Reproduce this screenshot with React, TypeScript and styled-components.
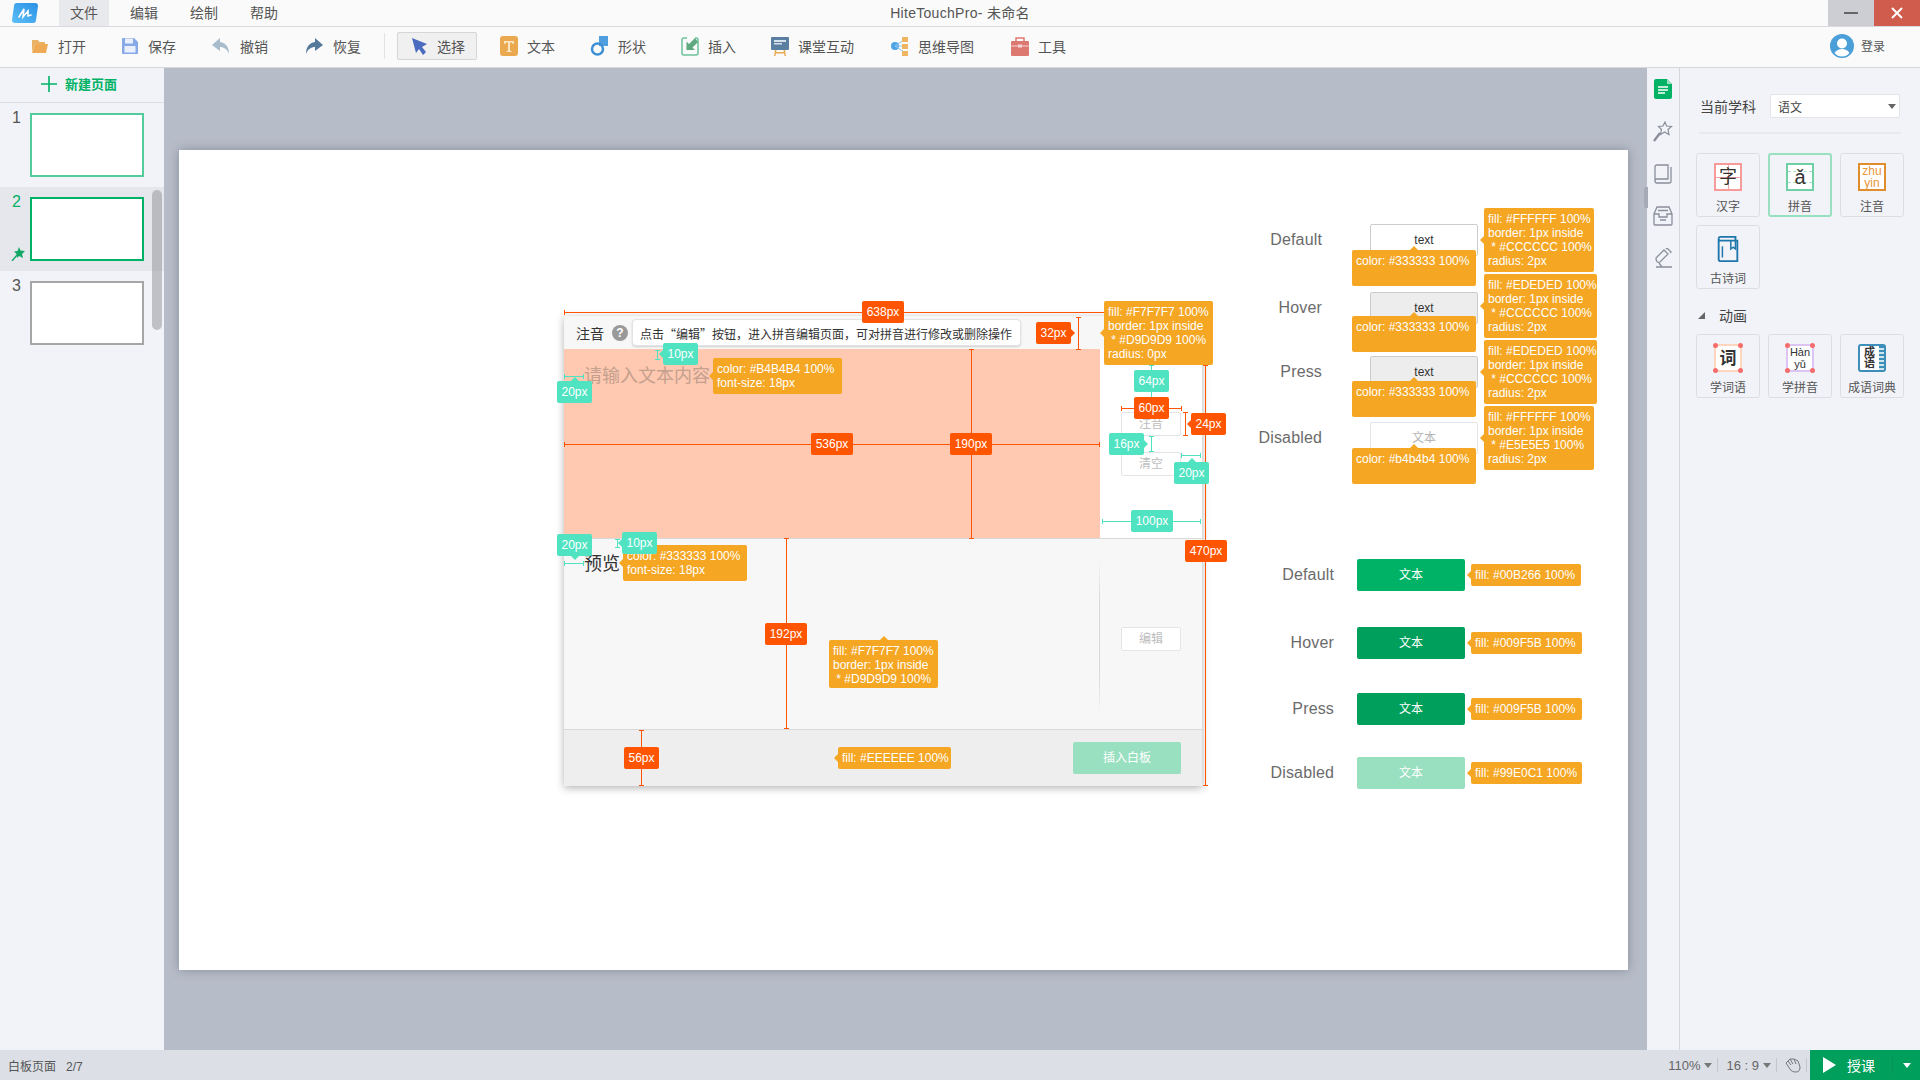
import React from 'react';
import styled, { createGlobalStyle, css } from 'styled-components';

const GlobalStyle = createGlobalStyle`
  * {
    box-sizing: border-box;
  }

  html,
  body {
    margin: 0;
    padding: 0;
    width: 1920px;
    height: 1080px;
    overflow: hidden;
    font-family: 'Liberation Sans', 'Noto Sans CJK SC', sans-serif;
    color: #555;
  }
`;

// page position of the white slide, annotations are listed in page coordinates
const SLIDE_X = 179;
const SLIDE_Y = 150;

const Page = styled.div`
  width: 1920px;
  height: 1080px;
  display: flex;
  flex-direction: column;
  background: #f1f3f8;
`;

const TitleBar = styled.div`
  height: 27px;
  flex: none;
  display: flex;
  position: relative;
  background: #fafafa;
  border-bottom: 1px solid #d9dadd;
`;

const Logo = styled.svg`
  width: 26px;
  height: 20px;
  margin: 3px 21px 0 12px;
`;

const MenuItem = styled.div<{ $active?: boolean }>`
  width: 50px;
  margin-right: 10px;
  height: 26px;
  line-height: 26px;
  text-align: center;
  font-size: 14px;
  color: #555;
  background: ${(p) => (p.$active ? '#e8e9ec' : 'transparent')};
`;

const AppTitle = styled.div`
  position: absolute;
  left: 0;
  right: 0;
  top: 0;
  line-height: 26px;
  text-align: center;
  font-size: 14px;
  letter-spacing: 0.3px;
  color: #555;
`;

const WinButtons = styled.div`
  margin-left: auto;
  display: flex;
`;

const WinButton = styled.div<{ $close?: boolean }>`
  width: 46px;
  height: 26px;
  display: flex;
  align-items: center;
  justify-content: center;
  background: ${(p) => (p.$close ? '#cf5c4c' : '#cdced3')};
`;

const Toolbar = styled.div`
  height: 41px;
  flex: none;
  display: flex;
  align-items: center;
  gap: 1px;
  padding: 0 0 3px 14px;
  background: #fafafa;
  border-bottom: 1px solid #d5d7dd;
`;

const ToolItem = styled.div<{ $selected?: boolean; $offset?: number }>`
  height: 28px;
  display: flex;
  align-items: center;
  gap: 9px;
  padding: 0 17px;
  margin-left: ${(p) => p.$offset || 0}px;
  font-size: 14px;
  color: #555;

  svg {
    flex: none;
  }

  ${(p) =>
    p.$selected &&
    css`
      padding: 0 11px 0 13px;
      background: #f0f0f1;
      border: 1px solid #d5d6d9;
      border-radius: 2px;
    `}
`;

const ToolSep = styled.div`
  width: 1px;
  height: 26px;
  background: #e2e3e6;
  margin: 0 11px 0 5px;
`;

const Login = styled.div`
  margin-left: auto;
  margin-right: 35px;
  display: flex;
  align-items: center;
  gap: 7px;
  font-size: 12px;
  color: #555;
`;

const Middle = styled.div`
  flex: 1;
  min-height: 0;
  display: flex;
`;

const PagesPanel = styled.div`
  width: 164px;
  flex: none;
  position: relative;
  background: #f1f3f8;
`;

const NewPage = styled.div`
  height: 35px;
  padding: 0 0 3px 41px;
  display: flex;
  align-items: center;
  gap: 8px;
  font-size: 13px;
  font-weight: 700;
  color: #00b266;
  border-bottom: 1px solid #dcdee4;
`;

const PageRow = styled.div<{ $active?: boolean }>`
  height: 84px;
  padding: 10px 0 0 30px;
  position: relative;
  background: ${(p) => (p.$active ? '#e5e7ec' : 'transparent')};
`;

const PageNumber = styled.span<{ $active?: boolean }>`
  position: absolute;
  left: 12px;
  top: 5px;
  font-size: 16px;
  line-height: 20px;
  color: ${(p) => (p.$active ? '#00b266' : '#555')};
`;

const Thumb = styled.div<{ $border: string }>`
  width: 114px;
  height: 64px;
  background: #fff;
  border: 2px solid ${(p) => p.$border};
`;

const Pin = styled.svg`
  position: absolute;
  left: 11px;
  top: 60px;
`;

const PagesScroll = styled.div`
  position: absolute;
  left: 152px;
  top: 122px;
  width: 10px;
  height: 140px;
  border-radius: 5px;
  background: rgba(130, 132, 140, 0.45);
`;

const Stage = styled.div`
  flex: 1;
  min-width: 0;
  display: flex;
  padding: 82px 19px 80px 15px;
  background: #b7bcc9;
  position: relative;
`;

const Slide = styled.div`
  flex: 1;
  position: relative;
  background: #fff;
  box-shadow: 0 0 10px rgba(80, 85, 100, 0.45);
`;

const SideHandle = styled.div`
  position: absolute;
  right: -1px;
  top: 119px;
  width: 4px;
  height: 21px;
  border-radius: 2px 0 0 2px;
  background: #a6aab6;
`;

const IconStrip = styled.div`
  width: 33px;
  flex: none;
  display: flex;
  flex-direction: column;
  align-items: center;
  gap: 22px;
  padding-top: 11px;
  border-right: 1px solid #d5d7dd;
  background: #f1f3f8;
`;

const RightPanel = styled.div`
  width: 240px;
  flex: none;
  padding: 26px 16px 0;
  background: #f1f3f8;
`;

const SubjectRow = styled.div`
  display: flex;
  align-items: center;
  gap: 14px;
  margin-left: 4px;
  font-size: 14px;
  color: #444;
`;

const SubjectSelect = styled.div`
  width: 130px;
  height: 24px;
  padding: 0 3px 0 7px;
  display: flex;
  align-items: center;
  justify-content: space-between;
  background: #fff;
  border: 1px solid #e2e4ea;
  border-radius: 2px;
  font-size: 12px;
  color: #444;
`;

const CaretDown = styled.i<{ $color?: string }>`
  width: 0;
  height: 0;
  border-left: 4px solid transparent;
  border-right: 4px solid transparent;
  border-top: 5px solid ${(p) => p.$color || '#666'};
`;

const PanelLine = styled.div`
  height: 2px;
  margin: 14px 3px 19px;
  background: #e7e9ee;
`;

const TileGrid = styled.div`
  display: grid;
  grid-template-columns: repeat(3, 64px);
  gap: 8px;
`;

const Tile = styled.div<{ $active?: boolean }>`
  height: 64px;
  display: flex;
  flex-direction: column;
  align-items: center;
  padding-top: ${(p) => (p.$active ? 8 : 9)}px;
  font-size: 12px;
  color: #555;
  border-radius: 3px;
  border: ${(p) => (p.$active ? '2px solid #99e0c1' : '1px solid #dcdee3')};
`;

const TileLabel = styled.span`
  margin-top: 7px;
  line-height: 18px;
  white-space: nowrap;
`;

const GlyphBox = styled.div<{ $border: string; $color?: string; $size?: number; $round?: boolean }>`
  width: 28px;
  height: 28px;
  flex: none;
  position: relative;
  display: flex;
  align-items: center;
  justify-content: center;
  text-align: center;
  background: #fff;
  border: 2px solid ${(p) => p.$border};
  border-radius: ${(p) => (p.$round ? 3 : 0)}px;
  color: ${(p) => p.$color || '#333'};
  font-size: ${(p) => p.$size || 18}px;
  line-height: 1;
`;

const CrossLines = styled.i<{ $color: string }>`
  position: absolute;
  inset: 0;
  background:
    linear-gradient(${(p) => p.$color}, ${(p) => p.$color}) center / 100% 1px no-repeat,
    linear-gradient(${(p) => p.$color}, ${(p) => p.$color}) center / 1px 100% no-repeat;
`;

const RuleLines = styled.i`
  position: absolute;
  inset: 6px 0;
  border-top: 1px dashed #9fe2c4;
  border-bottom: 1px dashed #9fe2c4;
`;

const Dot = styled.i<{ $r?: boolean; $b?: boolean }>`
  position: absolute;
  width: 5px;
  height: 5px;
  border-radius: 50%;
  background: #f56c6c;
  ${(p) => (p.$r ? 'right: -3px;' : 'left: -3px;')}
  ${(p) => (p.$b ? 'bottom: -3px;' : 'top: -3px;')}
`;

const Spiral = styled.i`
  position: absolute;
  right: 0;
  top: 0;
  bottom: 0;
  width: 5px;
  background: repeating-linear-gradient(#3d8eb9 0 2px, #cfe5f0 2px 4px);
`;

const GlyphText = styled.span<{ $bold?: boolean }>`
  position: relative;
  font-weight: ${(p) => (p.$bold ? 700 : 400)};
`;

const TwoLine = styled.div`
  line-height: 12px;
`;

const IdiomText = styled.div`
  margin-right: 5px;
  font-size: 11px;
  font-weight: 700;
  line-height: 11px;
`;

const SectionHead = styled.div`
  display: flex;
  align-items: center;
  gap: 14px;
  margin: 17px 0 10px 2px;
  height: 18px;
  font-size: 14px;
  color: #444;
`;

const OpenCaret = styled.i`
  width: 0;
  height: 0;
  border-left: 7px solid transparent;
  border-bottom: 7px solid #666;
`;

const StatusBar = styled.div`
  height: 30px;
  flex: none;
  display: flex;
  align-items: center;
  padding-left: 8px;
  background: #dcdfe6;
  font-size: 12px;
  color: #555;
`;

const StatusRight = styled.div`
  margin-left: auto;
  height: 100%;
  display: flex;
  align-items: center;
`;

const StatusItem = styled.div`
  display: flex;
  align-items: center;
  gap: 4px;
  padding: 0 5px 0 8px;
  height: 14px;
  font-size: 13px;
  color: #666;
  border-right: 1px solid #c4c7ce;

  &:last-of-type {
    border-right: 0;
    padding-right: 12px;
  }
`;

const TeachButton = styled.div`
  width: 110px;
  height: 30px;
  margin-left: 3px;
  display: flex;
  align-items: center;
  padding-left: 13px;
  gap: 11px;
  background: #009f5b;
  color: #fff;
  font-size: 14px;
  position: relative;
`;

const TeachCaret = styled.div`
  position: absolute;
  right: 0;
  top: 7px;
  width: 28px;
  height: 16px;
  display: flex;
  align-items: center;
  justify-content: center;
  border-left: 1px solid #0c8f56;
`;

const DesignWindow = styled.div`
  position: absolute;
  left: 385px;
  top: 166px;
  width: 638px;
  height: 470px;
  display: flex;
  flex-direction: column;
  background: #fff;
  box-shadow: 0 2px 8px rgba(0, 0, 0, 0.3);
`;

const DesignHeader = styled.div`
  height: 33px;
  flex: none;
  display: flex;
  align-items: center;
  padding-left: 12px;
  background: #f7f7f7;
  font-size: 14px;
  color: #333;
`;

const HelpMark = styled.span`
  width: 16px;
  height: 16px;
  margin: 0 4px 0 8px;
  border-radius: 50%;
  background: #999;
  color: #fff;
  font-size: 12px;
  font-weight: 700;
  line-height: 16px;
  text-align: center;
`;

const HintBox = styled.div`
  width: 389px;
  height: 27px;
  padding-left: 7px;
  background: #fff;
  border: 1px solid #e3e3e3;
  border-radius: 4px;
  box-shadow: 0 1px 2px rgba(0, 0, 0, 0.15);
  font-family: 'Noto Sans CJK SC', sans-serif;
  font-size: 12px;
  line-height: 27px;
  color: #333;
  white-space: nowrap;
`;

const DesignBody = styled.div`
  height: 189px;
  flex: none;
  display: flex;
`;

const InputArea = styled.div`
  width: 536px;
  flex: none;
  padding: 10px 0 0 20px;
  background: #ffc8b0;
  font-size: 18px;
  line-height: 34px;
  color: #c4a08e;
`;

const ActionColumn = styled.div`
  flex: 1;
  display: flex;
  flex-direction: column;
  gap: 16px;
  padding: 63px 0 0 21px;
`;

const GhostButton = styled.div`
  width: 60px;
  height: 24px;
  background: #fff;
  border: 1px solid #e5e5e5;
  border-radius: 2px;
  font-size: 12px;
  line-height: 23px;
  text-align: center;
  color: #bdbdbd;
`;

const DesignPreview = styled.div`
  height: 192px;
  flex: none;
  display: flex;
  background: #f7f7f7;
  border-top: 1px solid #d9d9d9;
  border-bottom: 1px solid #d9d9d9;
`;

const PreviewText = styled.div`
  width: 536px;
  flex: none;
  padding: 10px 0 0 20px;
  font-size: 18px;
  line-height: 30px;
  color: #333;
`;

const PreviewActions = styled.div`
  flex: 1;
  padding: 88px 0 0 21px;
  position: relative;

  &::before {
    content: '';
    position: absolute;
    left: -1px;
    top: 20px;
    bottom: 15px;
    width: 1px;
    background: linear-gradient(transparent, #d9d9d9 25%, #d9d9d9 75%, transparent);
  }
`;

const DesignFooter = styled.div`
  flex: 1;
  display: flex;
  align-items: center;
  justify-content: flex-end;
  padding-right: 21px;
  background: #eee;
`;

const InsertButton = styled.div`
  width: 108px;
  height: 32px;
  border-radius: 2px;
  background: #99e0c1;
  color: #fff;
  font-size: 12px;
  line-height: 32px;
  text-align: center;
`;

const StateRow = styled.div<{ $x: number; $y: number; $labelWidth: number; $gap: number }>`
  position: absolute;
  left: ${(p) => p.$x - SLIDE_X}px;
  top: ${(p) => p.$y - SLIDE_Y}px;
  display: grid;
  grid-template-columns: ${(p) => p.$labelWidth}px 108px;
  column-gap: ${(p) => p.$gap}px;
  align-items: center;
`;

const StateLabel = styled.div`
  text-align: right;
  font-size: 16px;
  letter-spacing: 0.15px;
  color: #6b6b6b;
`;

const StateButton = styled.div<{ $fill: string; $line?: string; $color: string }>`
  height: 32px;
  border-radius: 2px;
  background: ${(p) => p.$fill};
  border: ${(p) => (p.$line ? `1px solid ${p.$line}` : '0')};
  color: ${(p) => p.$color};
  font-size: 12px;
  line-height: ${(p) => (p.$line ? 30 : 32)}px;
  text-align: center;
`;

const TAG_COLORS = { red: '#ff5500', green: '#50e3c2', orange: '#f5a623' };
type TagKind = keyof typeof TAG_COLORS;
type Arrow = 'left' | 'right' | 'up' | 'down' | 'none';

const arrowCss = (arrow: Arrow, color: string) => {
  if (arrow === 'left')
    return css`
      left: -4px;
      top: 50%;
      margin-top: -4px;
      border-width: 4px 4px 4px 0;
      border-color: transparent ${color} transparent transparent;
    `;
  if (arrow === 'right')
    return css`
      right: -4px;
      top: 50%;
      margin-top: -4px;
      border-width: 4px 0 4px 4px;
      border-color: transparent transparent transparent ${color};
    `;
  if (arrow === 'up')
    return css`
      top: -4px;
      left: 50%;
      margin-left: -4px;
      border-width: 0 4px 4px 4px;
      border-color: transparent transparent ${color} transparent;
    `;
  if (arrow === 'down')
    return css`
      bottom: -4px;
      left: 50%;
      margin-left: -4px;
      border-width: 4px 4px 0 4px;
      border-color: ${color} transparent transparent transparent;
    `;
  return css`
    display: none;
  `;
};

const Tag = styled.div<{ $kind: TagKind; $x: number; $y: number; $w: number; $h: number; $arrow: Arrow }>`
  position: absolute;
  left: ${(p) => p.$x - SLIDE_X}px;
  top: ${(p) => p.$y - SLIDE_Y}px;
  width: ${(p) => p.$w}px;
  height: ${(p) => p.$h}px;
  background: ${(p) => TAG_COLORS[p.$kind]};
  border-radius: 2px;
  color: #fff;
  font-size: 12px;
  white-space: pre;
  ${(p) =>
    p.$kind === 'orange'
      ? css`
          padding: 4px 0 0 4px;
          line-height: 14px;
        `
      : css`
          line-height: ${p.$h}px;
          text-align: center;
        `}

  &::after {
    content: '';
    position: absolute;
    width: 0;
    height: 0;
    border-style: solid;
    ${(p) => arrowCss(p.$arrow, TAG_COLORS[p.$kind])}
  }
`;

const Measure = styled.div<{ $x: number; $y: number; $len: number; $vertical?: boolean; $color: string }>`
  position: absolute;
  left: ${(p) => p.$x - SLIDE_X}px;
  top: ${(p) => p.$y - SLIDE_Y}px;
  width: ${(p) => (p.$vertical ? 1 : p.$len)}px;
  height: ${(p) => (p.$vertical ? p.$len : 1)}px;
  background: ${(p) => p.$color};

  &::before,
  &::after {
    content: '';
    position: absolute;
    background: ${(p) => p.$color};
    ${(p) =>
      p.$vertical
        ? css`
            left: -2px;
            width: 5px;
            height: 1px;
          `
        : css`
            top: -2px;
            width: 1px;
            height: 5px;
          `}
  }

  &::before {
    left: ${(p) => (p.$vertical ? '-2px' : '0')};
    top: ${(p) => (p.$vertical ? '0' : '-2px')};
  }

  &::after {
    ${(p) => (p.$vertical ? 'bottom: 0;' : 'right: 0;')}
  }
`;

const RED = TAG_COLORS.red;
const GREEN = TAG_COLORS.green;

const measures: { x: number; y: number; len: number; v?: boolean; c: string }[] = [
  { x: 564, y: 312, len: 560, c: RED },
  { x: 1078, y: 317, len: 33, v: true, c: RED },
  { x: 971, y: 349, len: 190, v: true, c: RED },
  { x: 564, y: 444, len: 536, c: RED },
  { x: 1121, y: 408, len: 61, c: RED },
  { x: 1185, y: 412, len: 24, v: true, c: RED },
  { x: 1205, y: 365, len: 421, v: true, c: RED },
  { x: 786, y: 538, len: 191, v: true, c: RED },
  { x: 641, y: 730, len: 56, v: true, c: RED },
  { x: 657, y: 350, len: 10, v: true, c: GREEN },
  { x: 564, y: 376, len: 20, c: GREEN },
  { x: 1151, y: 365, len: 47, v: true, c: GREEN },
  { x: 1151, y: 436, len: 16, v: true, c: GREEN },
  { x: 1181, y: 455, len: 20, c: GREEN },
  { x: 1102, y: 521, len: 99, c: GREEN },
  { x: 564, y: 563, len: 20, c: GREEN },
  { x: 617, y: 539, len: 9, v: true, c: GREEN },
];

const tags: { k: TagKind; x: number; y: number; w: number; h: number; a: Arrow; t: string }[] = [
  { k: 'red', x: 862, y: 301, w: 42, h: 22, a: 'none', t: '638px' },
  { k: 'red', x: 1036, y: 322, w: 35, h: 22, a: 'right', t: '32px' },
  { k: 'red', x: 950, y: 433, w: 42, h: 22, a: 'none', t: '190px' },
  { k: 'red', x: 811, y: 433, w: 42, h: 22, a: 'none', t: '536px' },
  { k: 'red', x: 1191, y: 413, w: 35, h: 22, a: 'left', t: '24px' },
  { k: 'red', x: 1185, y: 540, w: 42, h: 22, a: 'none', t: '470px' },
  { k: 'red', x: 765, y: 623, w: 42, h: 22, a: 'none', t: '192px' },
  { k: 'red', x: 624, y: 747, w: 35, h: 22, a: 'none', t: '56px' },
  { k: 'orange', x: 1104, y: 301, w: 109, h: 64, a: 'left', t: 'fill: #F7F7F7 100%\nborder: 1px inside\n * #D9D9D9 100%\nradius: 0px' },
  { k: 'orange', x: 713, y: 358, w: 129, h: 36, a: 'left', t: 'color: #B4B4B4 100%\nfont-size: 18px' },
  { k: 'orange', x: 623, y: 545, w: 124, h: 36, a: 'left', t: 'color: #333333 100%\nfont-size: 18px' },
  { k: 'orange', x: 829, y: 640, w: 109, h: 48, a: 'up', t: 'fill: #F7F7F7 100%\nborder: 1px inside\n * #D9D9D9 100%' },
  { k: 'orange', x: 838, y: 747, w: 113, h: 22, a: 'left', t: 'fill: #EEEEEE 100%' },
  { k: 'green', x: 663, y: 343, w: 35, h: 22, a: 'left', t: '10px' },
  { k: 'green', x: 557, y: 381, w: 35, h: 22, a: 'up', t: '20px' },
  { k: 'green', x: 1134, y: 370, w: 35, h: 22, a: 'none', t: '64px' },
  { k: 'red', x: 1134, y: 397, w: 35, h: 22, a: 'none', t: '60px' },
  { k: 'green', x: 1109, y: 433, w: 35, h: 22, a: 'right', t: '16px' },
  { k: 'green', x: 1174, y: 462, w: 35, h: 22, a: 'up', t: '20px' },
  { k: 'green', x: 1131, y: 510, w: 42, h: 22, a: 'none', t: '100px' },
  { k: 'green', x: 557, y: 534, w: 35, h: 22, a: 'down', t: '20px' },
  { k: 'green', x: 622, y: 532, w: 35, h: 22, a: 'left', t: '10px' },
  // white button states
  { k: 'orange', x: 1484, y: 208, w: 110, h: 64, a: 'left', t: 'fill: #FFFFFF 100%\nborder: 1px inside\n * #CCCCCC 100%\nradius: 2px' },
  { k: 'orange', x: 1484, y: 274, w: 113, h: 64, a: 'left', t: 'fill: #EDEDED 100%\nborder: 1px inside\n * #CCCCCC 100%\nradius: 2px' },
  { k: 'orange', x: 1484, y: 340, w: 113, h: 64, a: 'left', t: 'fill: #EDEDED 100%\nborder: 1px inside\n * #CCCCCC 100%\nradius: 2px' },
  { k: 'orange', x: 1484, y: 406, w: 110, h: 64, a: 'left', t: 'fill: #FFFFFF 100%\nborder: 1px inside\n * #E5E5E5 100%\nradius: 2px' },
  { k: 'orange', x: 1352, y: 250, w: 124, h: 36, a: 'up', t: 'color: #333333 100%' },
  { k: 'orange', x: 1352, y: 316, w: 124, h: 36, a: 'up', t: 'color: #333333 100%' },
  { k: 'orange', x: 1352, y: 381, w: 124, h: 36, a: 'up', t: 'color: #333333 100%' },
  { k: 'orange', x: 1352, y: 448, w: 124, h: 36, a: 'up', t: 'color: #b4b4b4 100%' },
  // green button states
  { k: 'orange', x: 1471, y: 564, w: 110, h: 22, a: 'left', t: 'fill: #00B266 100%' },
  { k: 'orange', x: 1471, y: 632, w: 111, h: 22, a: 'left', t: 'fill: #009F5B 100%' },
  { k: 'orange', x: 1471, y: 698, w: 111, h: 22, a: 'left', t: 'fill: #009F5B 100%' },
  { k: 'orange', x: 1471, y: 762, w: 111, h: 22, a: 'left', t: 'fill: #99E0C1 100%' },
];

const whiteStates = [
  { y: 224, label: 'Default', fill: '#fff', line: '#ccc', color: '#333', text: 'text' },
  { y: 292, label: 'Hover', fill: '#ededed', line: '#ccc', color: '#333', text: 'text' },
  { y: 356, label: 'Press', fill: '#ededed', line: '#ccc', color: '#333', text: 'text' },
  { y: 422, label: 'Disabled', fill: '#fff', line: '#e5e5e5', color: '#b4b4b4', text: '文本' },
];

const greenStates = [
  { y: 559, label: 'Default', fill: '#00b266', color: '#fff' },
  { y: 627, label: 'Hover', fill: '#009f5b', color: '#fff' },
  { y: 693, label: 'Press', fill: '#009f5b', color: '#fff' },
  { y: 757, label: 'Disabled', fill: '#99e0c1', color: '#fff' },
];

const Folder = () => (
  <svg width="18" height="18" viewBox="0 0 18 18">
    <path d="M1 3h6l1.500 2H14v2H4L1 15z" fill="#e9b266" />
    <path d="M1 16l3-9h13l-2 9z" fill="#eeaa55" />
  </svg>
);

const Floppy = () => (
  <svg width="18" height="18" viewBox="0 0 18 18">
    <path d="M2 1h11l4 4v11a1 1 0 0 1-1 1H2a1 1 0 0 1-1-1V2a1 1 0 0 1 1-1z" fill="#88a9e8" />
    <rect x="4" y="1.500" width="8" height="5" fill="#eaf0fb" />
    <rect x="3.500" y="9" width="11" height="6.500" fill="#eaf0fb" />
  </svg>
);

const Undo = () => (
  <svg width="20" height="18" viewBox="0 0 20 18">
    <path d="M9 1L1 8l8 6v-4c4 0 7 2 9 7 0-7-3-11-9-12z" fill="#a9bccb" />
  </svg>
);

const Redo = () => (
  <svg width="20" height="18" viewBox="0 0 20 18">
    <path d="M11 1l8 7-8 6v-4c-4 0-7 2-9 7 0-7 3-11 9-12z" fill="#54799b" />
  </svg>
);

const Cursor = () => (
  <svg width="17" height="18" viewBox="0 0 17 18">
    <path d="M1 1l15 6-5 3 4 5-3 3-4-6-3 4z" fill="#4a6bbf" />
  </svg>
);

const TextTool = () => (
  <svg width="18" height="20" viewBox="0 0 18 20">
    <rect width="18" height="20" rx="3" fill="#eaa94f" />
    <path d="M4 5h10v3h-1l-1-1.500h-2v8l1.500.5v1h-5v-1L8 15V6.500H6L5 8H4z" fill="#fbe7c6" />
  </svg>
);

const ShapeTool = () => (
  <svg width="19" height="22" viewBox="0 0 19 22">
    <rect x="9" y="1" width="9" height="10" fill="#4f9fe0" />
    <circle cx="7.500" cy="14" r="5.500" fill="none" stroke="#3d8fd6" strokeWidth="2.500" />
  </svg>
);

const InsertTool = () => (
  <svg width="18" height="20" viewBox="0 0 18 20">
    <path d="M6 2H3a2 2 0 0 0-2 2v13a2 2 0 0 0 2 2h12a2 2 0 0 0 2-2V4a2 2 0 0 0-2-2h-1" fill="none" stroke="#6cc29c" strokeWidth="1.500" />
    <path d="M14 2L8 8 5.500 5.500V14H14l-2.500-2.500L17 6z" fill="#5ea97f" />
  </svg>
);

const Board = () => (
  <svg width="18" height="20" viewBox="0 0 18 20">
    <path d="M4 14l-1 6h1.500l1-6zM14 14l1 6h-1.500l-1-6zM5 16h8v1.500H5z" fill="#e9a94f" />
    <rect x="0" y="1" width="18" height="13" rx="1" fill="#5a7fa0" />
    <path d="M3 4h12v2H3zM3 7h8v1.500H3z" fill="#d8e2ec" />
  </svg>
);

const MindMap = () => (
  <svg width="18" height="20" viewBox="0 0 18 20">
    <circle cx="4" cy="10" r="4" fill="#4ea5e6" />
    <path d="M4 10l9-6M4 10h9M4 10l9 6" stroke="#8cc4ee" strokeWidth="1" />
    <rect x="11" y="1" width="6" height="5" fill="#f0b560" />
    <rect x="11" y="8" width="6" height="5" fill="#f0b560" />
    <rect x="11" y="15" width="6" height="5" fill="#f0b560" />
  </svg>
);

const Toolbox = () => (
  <svg width="18" height="20" viewBox="0 0 18 20">
    <path d="M5 5V2h8v3" fill="none" stroke="#df7a72" strokeWidth="1.500" />
    <rect y="5" width="18" height="15" rx="1" fill="#dd7870" />
    <path d="M0 10h18" stroke="#f4d6d3" strokeWidth="1" />
    <rect x="7" y="8.500" width="4" height="3" fill="#f4d6d3" />
  </svg>
);

const Avatar = () => (
  <svg width="24" height="24" viewBox="0 0 24 24">
    <circle cx="12" cy="12" r="12" fill="#4a9fd8" />
    <circle cx="12" cy="9.500" r="5" fill="#fff" />
    <path d="M4.500 19c2-3 4.500-4 7.500-4s5.500 1 7.500 4c-2 2.500-4.500 3.500-7.500 3.500s-5.500-1-7.500-3.500z" fill="#fff" />
  </svg>
);

const DocIcon = () => (
  <svg width="18" height="20" viewBox="0 0 18 20">
    <path d="M2 0h11l5 5v13a2 2 0 0 1-2 2H2a2 2 0 0 1-2-2V2a2 2 0 0 1 2-2z" fill="#00b266" />
    <path d="M13 0l5 5h-5z" fill="#9be0c0" />
    <path d="M4 8h10M4 11h10M4 14h7" stroke="#fff" strokeWidth="1.300" />
  </svg>
);

const WandIcon = () => (
  <svg width="21" height="21" viewBox="0 0 21 21" fill="none" stroke="#8b8f9b" strokeWidth="1.200">
    <path d="M12 1l1.500 4 5 .5-3.500 3 1 5-4.500-2.500-4 2.500 1-5-3-3 4.500-.5z" />
    <path d="M7 12L1 20" strokeWidth="2.400" />
  </svg>
);

const BookIcon = () => (
  <svg width="18" height="20" viewBox="0 0 18 20" fill="none" stroke="#8b8f9b" strokeWidth="1.300">
    <path d="M1 3a2 2 0 0 1 2-2h11v14H3a2 2 0 0 0-2 2zM1 17a2 2 0 0 0 2 2h12a2 2 0 0 0 2-2V3" />
  </svg>
);

const TrayIcon = () => (
  <svg width="20" height="20" viewBox="0 0 20 20" fill="none" stroke="#8b8f9b" strokeWidth="1.300">
    <path d="M4 1h12l3 7v10a1 1 0 0 1-1 1H2a1 1 0 0 1-1-1V8z" />
    <path d="M1 8h5v3h8V8h5M5 4.500h10M7 14h6" />
  </svg>
);

const PenIcon = () => (
  <svg width="20" height="20" viewBox="0 0 20 20" fill="none" stroke="#8b8f9b" strokeWidth="1.300">
    <path d="M3 10l8-8 4 4-8 8c-2 1-4 0-4-4zM13 1l1-1 4 4-1 1" />
    <path d="M3 19h16M6 15l3 4" />
  </svg>
);

const AncientBook = () => (
  <svg width="24" height="30" viewBox="0 0 24 30" fill="none" stroke="#1f77ab" strokeWidth="2">
    <path d="M2 4a2 2 0 0 1 2-2h16v4" />
    <path d="M2 4v22a2 2 0 0 0 2 2h18V6H4a2 2 0 0 1-2-2z" />
    <path d="M15 6v9l2.500-2 2.500 2V6M6 12v12" strokeWidth="1.600" />
  </svg>
);

const HandIcon = () => (
  <svg width="16" height="15" viewBox="0 0 16 15" fill="none" stroke="#777" strokeWidth="1">
    <path d="M1 5l4 6c1 2 3 3 6 3 3 0 4-2 4-5L13 3 9 1 5 1 3 3z" />
    <path d="M3 3l3 4M5 1l3 5M9 1l2 5" />
  </svg>
);

const App = () => (
  <Page>
    <GlobalStyle />
    <TitleBar>
      <Logo viewBox="0 0 26 20">
        <defs>
          <linearGradient id="logoFill" x1="0" y1="1" x2="1" y2="0">
            <stop offset="0" stopColor="#5cc0f7" />
            <stop offset="1" stopColor="#2a8fe6" />
          </linearGradient>
        </defs>
        <path d="M5 0h18a3 3 0 0 1 3 3l-2 14a3 3 0 0 1-3 3H3a3 3 0 0 1-3-3L2 3a3 3 0 0 1 3-3z" fill="url(#logoFill)" />
        <path d="M7 14l5-8-1 8 5-6 0 5 3-1" fill="none" stroke="#fff" strokeWidth="1.600" strokeLinecap="round" />
      </Logo>
      <MenuItem $active>文件</MenuItem>
      <MenuItem>编辑</MenuItem>
      <MenuItem>绘制</MenuItem>
      <MenuItem>帮助</MenuItem>
      <AppTitle>HiteTouchPro- 未命名</AppTitle>
      <WinButtons>
        <WinButton>
          <svg width="14" height="2" viewBox="0 0 14 2">
            <rect width="14" height="2" fill="#666" />
          </svg>
        </WinButton>
        <WinButton $close>
          <svg width="12" height="12" viewBox="0 0 12 12">
            <path d="M1 1l10 10M11 1L1 11" stroke="#fff" strokeWidth="2" />
          </svg>
        </WinButton>
      </WinButtons>
    </TitleBar>

    <Toolbar>
      <ToolItem><Folder />打开</ToolItem>
      <ToolItem><Floppy />保存</ToolItem>
      <ToolItem><Undo />撤销</ToolItem>
      <ToolItem $offset={1}><Redo />恢复</ToolItem>
      <ToolSep />
      <ToolItem $selected><Cursor />选择</ToolItem>
      <ToolItem $offset={5}><TextTool />文本</ToolItem>
      <ToolItem><ShapeTool />形状</ToolItem>
      <ToolItem><InsertTool />插入</ToolItem>
      <ToolItem><Board />课堂互动</ToolItem>
      <ToolItem $offset={2}><MindMap />思维导图</ToolItem>
      <ToolItem $offset={2}><Toolbox />工具</ToolItem>
      <Login><Avatar />登录</Login>
    </Toolbar>

    <Middle>
      <PagesPanel>
        <NewPage>
          <svg width="16" height="16" viewBox="0 0 16 16">
            <path d="M8 0v16M0 8h16" stroke="#00b266" strokeWidth="1.600" />
          </svg>
          新建页面
        </NewPage>
        <PageRow>
          <PageNumber>1</PageNumber>
          <Thumb $border="#52cc9a" />
        </PageRow>
        <PageRow $active>
          <PageNumber $active>2</PageNumber>
          <Thumb $border="#00b266" />
          <Pin width="14" height="14" viewBox="0 0 14 14">
            <path d="M8 0l1.500 3.500L14 4l-3 3 1 4-4-2-2 2-.500-4L3 4.500 6.500 4z" fill="#12a866" />
            <path d="M6 8l-5 6" stroke="#12a866" strokeWidth="1.400" />
          </Pin>
        </PageRow>
        <PageRow>
          <PageNumber>3</PageNumber>
          <Thumb $border="#a6a6a6" />
        </PageRow>
        <PagesScroll />
      </PagesPanel>

      <Stage>
        <Slide>
          <DesignWindow>
            <DesignHeader>
              注音
              <HelpMark>?</HelpMark>
              <HintBox>点击“编辑”按钮，进入拼音编辑页面，可对拼音进行修改或删除操作</HintBox>
            </DesignHeader>
            <DesignBody>
              <InputArea>请输入文本内容</InputArea>
              <ActionColumn>
                <GhostButton>注音</GhostButton>
                <GhostButton>清空</GhostButton>
              </ActionColumn>
            </DesignBody>
            <DesignPreview>
              <PreviewText>预览</PreviewText>
              <PreviewActions>
                <GhostButton>编辑</GhostButton>
              </PreviewActions>
            </DesignPreview>
            <DesignFooter>
              <InsertButton>插入白板</InsertButton>
            </DesignFooter>
          </DesignWindow>

          {whiteStates.map((s) => (
            <StateRow key={s.y} $x={1240} $y={s.y} $labelWidth={82} $gap={48}>
              <StateLabel>{s.label}</StateLabel>
              <StateButton $fill={s.fill} $line={s.line} $color={s.color}>{s.text}</StateButton>
            </StateRow>
          ))}
          {greenStates.map((s) => (
            <StateRow key={s.y} $x={1240} $y={s.y} $labelWidth={94} $gap={23}>
              <StateLabel>{s.label}</StateLabel>
              <StateButton $fill={s.fill} $color={s.color}>文本</StateButton>
            </StateRow>
          ))}

          {measures.map((m, i) => (
            <Measure key={i} $x={m.x} $y={m.y} $len={m.len} $vertical={m.v} $color={m.c} />
          ))}
          {tags.map((t, i) => (
            <Tag key={i} $kind={t.k} $x={t.x} $y={t.y} $w={t.w} $h={t.h} $arrow={t.a}>{t.t}</Tag>
          ))}
        </Slide>
        <SideHandle />
      </Stage>

      <IconStrip>
        <DocIcon />
        <WandIcon />
        <BookIcon />
        <TrayIcon />
        <PenIcon />
      </IconStrip>

      <RightPanel>
        <SubjectRow>
          当前学科
          <SubjectSelect>
            语文
            <CaretDown />
          </SubjectSelect>
        </SubjectRow>
        <PanelLine />
        <TileGrid>
          <Tile>
            <GlyphBox $border="#f79a9a" $size={18}>
              <CrossLines $color="#f6a5a5" />
              <GlyphText>字</GlyphText>
            </GlyphBox>
            <TileLabel>汉字</TileLabel>
          </Tile>
          <Tile $active>
            <GlyphBox $border="#6fd0a6" $size={20}>
              <RuleLines />
              <GlyphText>ǎ</GlyphText>
            </GlyphBox>
            <TileLabel>拼音</TileLabel>
          </Tile>
          <Tile>
            <GlyphBox $border="#e08e2d" $color="#e8963a" $size={12}>
              <TwoLine>zhu<br />yin</TwoLine>
            </GlyphBox>
            <TileLabel>注音</TileLabel>
          </Tile>
          <Tile>
            <AncientBook />
            <TileLabel>古诗词</TileLabel>
          </Tile>
        </TileGrid>
        <SectionHead>
          <OpenCaret />
          动画
        </SectionHead>
        <TileGrid>
          <Tile>
            <GlyphBox $border="#ffd5bd" $size={17}>
              <Dot /><Dot $r /><Dot $b /><Dot $r $b />
              <GlyphText $bold>词</GlyphText>
            </GlyphBox>
            <TileLabel>学词语</TileLabel>
          </Tile>
          <Tile>
            <GlyphBox $border="#dcc4f5" $size={11}>
              <Dot /><Dot $r /><Dot $b /><Dot $r $b />
              <TwoLine>Hàn<br />yǔ</TwoLine>
            </GlyphBox>
            <TileLabel>学拼音</TileLabel>
          </Tile>
          <Tile>
            <GlyphBox $border="#3d8eb9" $round>
              <Spiral />
              <IdiomText>成<br />语</IdiomText>
            </GlyphBox>
            <TileLabel>成语词典</TileLabel>
          </Tile>
        </TileGrid>
      </RightPanel>
    </Middle>

    <StatusBar>
      白板页面&nbsp;&nbsp;&nbsp;2/7
      <StatusRight>
        <StatusItem>110% <CaretDown $color="#777" /></StatusItem>
        <StatusItem>16 : 9 <CaretDown $color="#777" /></StatusItem>
        <StatusItem><HandIcon /></StatusItem>
        <TeachButton>
          <svg width="13" height="16" viewBox="0 0 13 16">
            <path d="M0 0l13 8-13 8z" fill="#fff" />
          </svg>
          授课
          <TeachCaret><CaretDown $color="#fff" /></TeachCaret>
        </TeachButton>
      </StatusRight>
    </StatusBar>
  </Page>
);

export default App;
